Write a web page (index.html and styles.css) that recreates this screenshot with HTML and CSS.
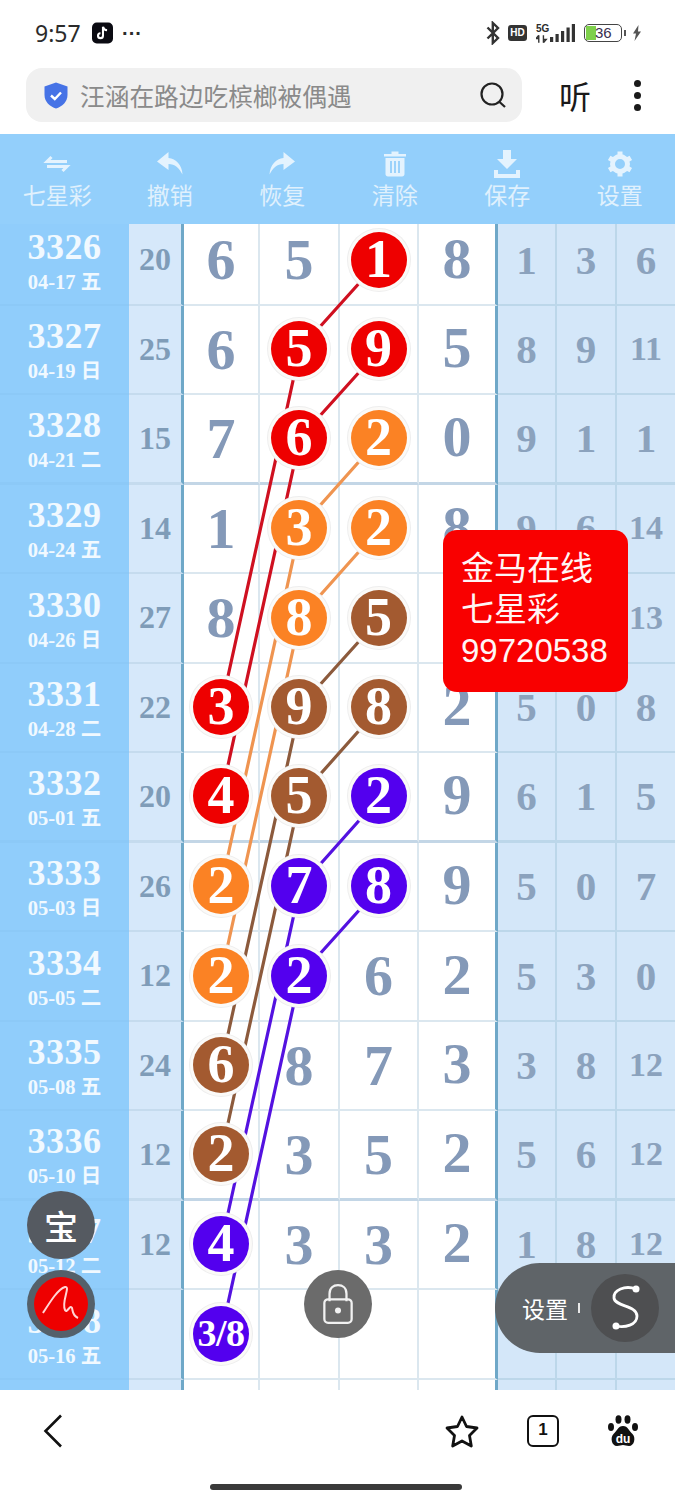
FILE: index.html
```html
<!DOCTYPE html>
<html>

<head>
    <meta charset="UTF-8">
    <title>七星彩</title>
    <link rel="stylesheet" href="styles.css">
</head>

<body>

    <main class="phone">

        <div class="status">
            <span class="time">9:57</span>
            <svg class="tiktok" viewBox="0 0 22 22"><rect width="22" height="22" rx="5" fill="#0b0b12"/><path d="M11.5 4.500V13.800A2.600 2.600 0 1 1 8.900 11.200M11.500 4.500C12 6.800 13.600 8 15.800 8.200" fill="none" stroke="#fff" stroke-width="2.200"/></svg>
            <span class="more">···</span>
            <span class="status-gap"></span>
            <svg class="ic-bt" viewBox="0 0 14 24"><path d="M1.500 6.500L12 17L6.800 22V2L12 7L1.500 17.500" fill="none" stroke="#333" stroke-width="2.400"/></svg>
            <span class="hd">HD</span>
            <span class="net">
                <span class="net-5g">5G</span>
                <svg class="net-arrows" viewBox="0 0 14 8"><path d="M3 0V8M3 0L0 3.500H3M8 8V0M8 8L11 4.500H8" fill="none" stroke="#333" stroke-width="1.500"/></svg>
            </span>
            <svg class="bars" viewBox="0 0 25 18"><rect x="0" y="13" width="3.200" height="5" fill="#333"/><rect x="5.500" y="10" width="3.200" height="8" fill="#333"/><rect x="11" y="7" width="3.200" height="11" fill="#333"/><rect x="16.500" y="3.500" width="3.200" height="14.500" fill="#333"/><rect x="21.800" y="0" width="3.200" height="18" fill="#333"/></svg>
            <span class="battery"><span class="battery-fill"></span><span class="battery-num">36</span></span>
            <span class="battery-tip"></span>
            <svg class="bolt" viewBox="0 0 10 16"><path d="M6.500 0L1 8.500H4L2.500 16L9 6.500H6Z" fill="#555"/></svg>
        </div>

        <div class="addr">
            <div class="search">
                <svg class="shield" viewBox="0 0 24 27"><path d="M12 0.500L23.500 4.500V13C23.500 20 18 24.500 12 26.500C6 24.500 0.500 20 0.500 13V4.500Z" fill="#4673e6"/><path d="M7 13.500L10.800 17L17 10.500" fill="none" stroke="#fff" stroke-width="2.400"/></svg>
                <span class="search-text">汪涵在路边吃槟榔被偶遇</span>
                <svg class="search-ic" viewBox="0 0 26 26"><circle cx="12" cy="12" r="10.500" fill="none" stroke="#222" stroke-width="2.200"/><path d="M19 19.500L25 25" stroke="#222" stroke-width="2.200"/></svg>
            </div>
            <span class="listen">听</span>
            <span class="dots"><i></i><i></i><i></i></span>
        </div>

        <div class="tools">
            <div class="tool">
                <svg class="tool-ic" viewBox="0 0 28 28"><path d="M8.500 7L4 11.500H24M19.500 21L24 16.500H4" fill="none" stroke="#e4f3fe" stroke-width="3"/></svg>
                <span>七星彩</span>
            </div>
            <div class="tool">
                <svg class="tool-ic" viewBox="0 0 28 28"><path d="M12.500 2L1 11.500L12.500 20V14C19 14 23 18 26.500 24.500C26 15 20 8.500 12.500 8Z" fill="#e4f3fe"/></svg>
                <span>撤销</span>
            </div>
            <div class="tool">
                <svg class="tool-ic" viewBox="0 0 28 28"><path d="M15.500 2L27 11.500L15.500 20V14C9 14 5 18 1.500 24.500C2 15 8 8.500 15.500 8Z" fill="#e4f3fe"/></svg>
                <span>恢复</span>
            </div>
            <div class="tool">
                <svg class="tool-ic" viewBox="0 0 28 28"><path d="M10.500 1.500H17.500V4H25V6.500H3V4H10.500ZM4.500 8H23.500V24C23.500 25.500 22.500 26.500 21 26.500H7C5.500 26.500 4.500 25.500 4.500 24Z" fill="#e4f3fe"/><path d="M10 11V23M14 11V23M18 11V23" stroke="#93cffb" stroke-width="1.800"/></svg>
                <span>清除</span>
            </div>
            <div class="tool">
                <svg class="tool-ic" viewBox="0 0 28 28"><path d="M10 0H18V9H24L14 19L4 9H10ZM1 20H5V24H23V20H27V28H1Z" fill="#e4f3fe"/></svg>
                <span>保存</span>
            </div>
            <div class="tool">
                <svg class="tool-ic" viewBox="0 0 28 28"><circle cx="14" cy="14" r="7.500" fill="none" stroke="#e4f3fe" stroke-width="5"/><path d="M14 1.500V6M14 22V26.500M3.200 7.800L7 10M21 18L24.800 20.200M3.200 20.200L7 18M21 10L24.800 7.800" stroke="#e4f3fe" stroke-width="5"/></svg>
                <span>设置</span>
            </div>
        </div>

        <div class="chart">
            <div class="chart-inner">

                <svg class="links" viewBox="0 224 675 1166">
                    <g class="link-red">
                        <path d="M380 260L300 349L221 708"/>
                        <path d="M380 349L300 438L221 797"/>
                    </g>
                    <g class="link-orange">
                        <path d="M380 438L300 528L221 887"/>
                        <path d="M380 528L300 618L221 976"/>
                    </g>
                    <g class="link-brown">
                        <path d="M380 618L300 707L221 1066"/>
                        <path d="M380 707L300 797L221 1155"/>
                    </g>
                    <g class="link-purple">
                        <path d="M380 797L300 887L221 1245"/>
                        <path d="M380 887L300 976L221 1335"/>
                    </g>
                </svg>

                <div class="row">
                    <div class="issue"><b>3326</b><small>04-17 五</small></div><div class="sum">20</div>
                    <div class="c c1">6</div><div class="c c2">5</div><div class="c c3"><span class="ball red">1</span></div><div class="c c4">8</div>
                    <div class="r r1">1</div><div class="r r2">3</div><div class="r r3">6</div>
                </div>
                <div class="row">
                    <div class="issue"><b>3327</b><small>04-19 日</small></div><div class="sum">25</div>
                    <div class="c c1">6</div><div class="c c2"><span class="ball red">5</span></div><div class="c c3"><span class="ball red">9</span></div><div class="c c4">5</div>
                    <div class="r r1">8</div><div class="r r2">9</div><div class="r r3 two">11</div>
                </div>
                <div class="row row-end">
                    <div class="issue"><b>3328</b><small>04-21 二</small></div><div class="sum">15</div>
                    <div class="c c1">7</div><div class="c c2"><span class="ball red">6</span></div><div class="c c3"><span class="ball orange">2</span></div><div class="c c4">0</div>
                    <div class="r r1">9</div><div class="r r2">1</div><div class="r r3">1</div>
                </div>
                <div class="row">
                    <div class="issue"><b>3329</b><small>04-24 五</small></div><div class="sum">14</div>
                    <div class="c c1">1</div><div class="c c2"><span class="ball orange">3</span></div><div class="c c3"><span class="ball orange">2</span></div><div class="c c4">8</div>
                    <div class="r r1">9</div><div class="r r2">6</div><div class="r r3 two">14</div>
                </div>
                <div class="row">
                    <div class="issue"><b>3330</b><small>04-26 日</small></div><div class="sum">27</div>
                    <div class="c c1">8</div><div class="c c2"><span class="ball orange">8</span></div><div class="c c3"><span class="ball brown">5</span></div><div class="c c4"></div>
                    <div class="r r1"></div><div class="r r2"></div><div class="r r3 two">13</div>
                </div>
                <div class="row">
                    <div class="issue"><b>3331</b><small>04-28 二</small></div><div class="sum">22</div>
                    <div class="c c1"><span class="ball red">3</span></div><div class="c c2"><span class="ball brown">9</span></div><div class="c c3"><span class="ball brown">8</span></div><div class="c c4">2</div>
                    <div class="r r1">5</div><div class="r r2">0</div><div class="r r3">8</div>
                </div>
                <div class="row row-end">
                    <div class="issue"><b>3332</b><small>05-01 五</small></div><div class="sum">20</div>
                    <div class="c c1"><span class="ball red">4</span></div><div class="c c2"><span class="ball brown">5</span></div><div class="c c3"><span class="ball purple">2</span></div><div class="c c4">9</div>
                    <div class="r r1">6</div><div class="r r2">1</div><div class="r r3">5</div>
                </div>
                <div class="row">
                    <div class="issue"><b>3333</b><small>05-03 日</small></div><div class="sum">26</div>
                    <div class="c c1"><span class="ball orange">2</span></div><div class="c c2"><span class="ball purple">7</span></div><div class="c c3"><span class="ball purple">8</span></div><div class="c c4">9</div>
                    <div class="r r1">5</div><div class="r r2">0</div><div class="r r3">7</div>
                </div>
                <div class="row">
                    <div class="issue"><b>3334</b><small>05-05 二</small></div><div class="sum">12</div>
                    <div class="c c1"><span class="ball orange">2</span></div><div class="c c2"><span class="ball purple">2</span></div><div class="c c3">6</div><div class="c c4">2</div>
                    <div class="r r1">5</div><div class="r r2">3</div><div class="r r3">0</div>
                </div>
                <div class="row">
                    <div class="issue"><b>3335</b><small>05-08 五</small></div><div class="sum">24</div>
                    <div class="c c1"><span class="ball brown">6</span></div><div class="c c2">8</div><div class="c c3">7</div><div class="c c4">3</div>
                    <div class="r r1">3</div><div class="r r2">8</div><div class="r r3 two">12</div>
                </div>
                <div class="row row-end">
                    <div class="issue"><b>3336</b><small>05-10 日</small></div><div class="sum">12</div>
                    <div class="c c1"><span class="ball brown">2</span></div><div class="c c2">3</div><div class="c c3">5</div><div class="c c4">2</div>
                    <div class="r r1">5</div><div class="r r2">6</div><div class="r r3 two">12</div>
                </div>
                <div class="row">
                    <div class="issue"><b>3337</b><small>05-12 二</small></div><div class="sum">12</div>
                    <div class="c c1"><span class="ball purple">4</span></div><div class="c c2">3</div><div class="c c3">3</div><div class="c c4">2</div>
                    <div class="r r1">1</div><div class="r r2">8</div><div class="r r3 two">12</div>
                </div>
                <div class="row">
                    <div class="issue"><b>3338</b><small>05-16 五</small></div><div class="sum"></div>
                    <div class="c c1"><span class="ball purple frac">3/8</span></div><div class="c c2"></div><div class="c c3"></div><div class="c c4"></div>
                    <div class="r r1"></div><div class="r r2"></div><div class="r r3"></div>
                </div>
                <div class="row">
                    <div class="issue"></div><div class="sum"></div>
                    <div class="c c1"></div><div class="c c2"></div><div class="c c3"></div><div class="c c4"></div>
                    <div class="r r1"></div><div class="r r2"></div><div class="r r3"></div>
                </div>
            </div>
        </div>

        <div class="bottom">
            <svg class="back" viewBox="0 0 20 34"><path d="M18 1.500L2.500 17L18 32.500" fill="none" stroke="#111" stroke-width="2.600"/></svg>
            <span class="bottom-gap"></span>
            <svg class="star" viewBox="0 0 34 33"><path d="M17 2L21.500 11.500L32 13L24.500 20.500L26.300 31L17 26L7.700 31L9.500 20.500L2 13L12.500 11.500Z" fill="none" stroke="#111" stroke-width="2.800" stroke-linejoin="round"/></svg>
            <span class="tab-count">1</span>
            <svg class="paw" viewBox="0 0 30 32"><ellipse cx="10.500" cy="4.500" rx="3" ry="4.200" fill="#111"/><ellipse cx="19.500" cy="4.500" rx="3" ry="4.200" fill="#111"/><ellipse cx="3" cy="12" rx="3" ry="4" fill="#111"/><ellipse cx="27" cy="12" rx="3" ry="4" fill="#111"/><path d="M15 11C20 11 21 16 24.500 19C28 22.500 26.500 31 21 31C18.500 31 17 30 15 30C13 30 11.500 31 9 31C3.500 31 2 22.500 5.500 19C9 16 10 11 15 11Z" fill="#111"/><text x="15" y="28" class="paw-text">du</text></svg>
        </div>

        <div class="home-bar"></div>

        <div class="promo">金马在线<br>七星彩<br>99720538</div>

        <div class="float-bao">宝</div>
        <div class="float-sign">
            <svg viewBox="0 0 54 54"><path d="M9 36C16 25 24 12 31 10C37 9 27 25 31 33C33 37 36 27 38 31C39 34 38 38 44 41" fill="none" stroke="#ffd5d5" stroke-width="2"/></svg>
        </div>
        <div class="float-lock">
            <svg viewBox="0 0 34 44"><path d="M8 19V11C8 5 12 2 17 2C22 2 26 5 26 11V19" fill="none" stroke="#f2f2f2" stroke-width="2.400"/><rect x="2.500" y="17" width="29" height="25" rx="4" fill="none" stroke="#f2f2f2" stroke-width="2.400"/><circle cx="17" cy="29" r="3.200" fill="#f2f2f2"/></svg>
        </div>
        <div class="float-set">
            <span class="float-set-label">设置</span>
            <span class="float-set-tick"></span>
            <span class="float-s">
                <svg viewBox="0 0 40 50"><path d="M31 6C20 2 8 7 9 15C10 24 32 22 32 33C32 42 20 45 11 43" fill="none" stroke="#fff" stroke-width="2.800"/><circle cx="31" cy="6" r="3.500" fill="#fff"/><circle cx="11" cy="43" r="3.500" fill="#fff"/></svg>
            </span>
        </div>
    </main>

</body>

</html>
```

FILE: styles.css
```css
* {
    box-sizing: border-box;
}

body {
    margin: 0;
    background-color: #fff;
    font-family: "Liberation Sans", "Noto Sans CJK SC", sans-serif;
}

.phone {
    position: relative;
    width: 675px;
    height: 1500px;
    overflow: hidden;
    display: flex;
    flex-direction: column;
}

/* status bar */
.status {
    height: 60px;
    padding: 6px 33px 0 35px;
    display: flex;
    align-items: center;
    color: #2b2b2b;
}

.time {
    font-family: "Noto Sans", sans-serif;
    font-size: 23px;
    width: 57px;
}

.tiktok {
    width: 21px;
    height: 22px;
}

.more {
    margin-left: 9px;
    font-size: 20px;
    font-weight: bold;
    letter-spacing: 0;
}

.status-gap {
    flex: 1;
}

.ic-bt {
    width: 14px;
    height: 24px;
}

.hd {
    margin-left: 8px;
    width: 19px;
    height: 16px;
    border-radius: 3px;
    background-color: #333;
    color: #fff;
    font-size: 10px;
    font-weight: bold;
    line-height: 16px;
    text-align: center;
}

.net {
    margin-left: 9px;
    width: 14px;
    display: flex;
    flex-direction: column;
    align-items: flex-start;
}

.net-5g {
    font-size: 10px;
    font-weight: bold;
    line-height: 10px;
}

.net-arrows {
    width: 13px;
    height: 8px;
    margin-top: 1px;
}

.bars {
    width: 25px;
    height: 18px;
}

.battery {
    position: relative;
    margin-left: 9px;
    width: 38px;
    height: 18px;
    border: 1.500px solid #444;
    border-radius: 5px;
    overflow: hidden;
}

.battery-fill {
    position: absolute;
    left: 1px;
    top: 1px;
    bottom: 1px;
    width: 10px;
    background-color: #7ed04b;
}

.battery-num {
    position: absolute;
    left: 10px;
    top: -1px;
    font-size: 15px;
    line-height: 17px;
    color: #3a3050;
}

.battery-tip {
    width: 2px;
    height: 6px;
    margin-left: 2px;
    background-color: #555;
}

.bolt {
    margin-left: 6px;
    width: 10px;
    height: 16px;
}

/* address bar */
.addr {
    height: 74px;
    padding: 8px 0 12px 26px;
    display: flex;
    align-items: center;
}

.search {
    width: 496px;
    height: 54px;
    padding: 0 16px 0 18px;
    border-radius: 16px;
    background-color: #f0f0f0;
    display: flex;
    align-items: center;
}

.shield {
    width: 24px;
    height: 27px;
}

.search-text {
    flex: 1;
    margin-left: 12px;
    font-size: 24.700px;
    color: #8a8a8a;
    white-space: nowrap;
}

.search-ic {
    width: 26px;
    height: 26px;
}

.listen {
    margin-left: 37px;
    font-size: 32px;
    color: #1a1a1a;
}

.dots {
    margin-left: 43px;
    display: flex;
    flex-direction: column;
    gap: 5px;
}

.dots i {
    width: 7px;
    height: 7px;
    border-radius: 50%;
    background-color: #1a1a1a;
}

/* toolbar */
.tools {
    position: relative;
    z-index: 3;
    height: 90px;
    padding: 16px 0 0 1px;
    background-color: #93cffb;
    display: grid;
    grid-template-columns: 112.500px 112.500px 112.500px 112.500px 112.500px 112.500px;
}

.tool {
    display: flex;
    flex-direction: column;
    align-items: center;
    font-size: 23px;
    line-height: 32px;
    color: #e0f1fd;
}

.tool-ic {
    width: 28px;
    height: 28px;
    margin-bottom: 2px;
}

/* chart */
.chart {
    position: relative;
    height: 1166px;
    overflow: hidden;
    background-color: #fff;
}

.chart-inner {
    position: relative;
    margin-top: -8px;
    font-family: "Liberation Serif", "Noto Sans CJK SC", serif;
    font-weight: bold;
}

.links {
    position: absolute;
    left: 0;
    top: 8px;
    width: 675px;
    height: 1166px;
    z-index: 1;
    fill: none;
    stroke-width: 3.200px;
}

.link-red {
    stroke: #cf1020;
}

.link-orange {
    stroke: #ef9450;
}

.link-brown {
    stroke: #8c5a3c;
}

.link-purple {
    stroke: #5412e0;
}

.row {
    height: 89.500px;
    display: grid;
    grid-template-columns: 129px 55px 76px 80px 79px 79px 59px 60px 58px;
}

.row > * {
    border-bottom: 2px solid #dbe7ef;
}

.row-end > * {
    border-bottom: 3px solid #c3d6e6;
}

.row > .issue {
    padding-top: 4px;
    border-bottom-color: #8cc9f7;
    background-color: #90cdfb;
    display: flex;
    flex-direction: column;
    align-items: center;
    justify-content: center;
    color: #f1f9ff;
}

.issue b {
    font-size: 36px;
    line-height: 40px;
    letter-spacing: 0.500px;
}

.issue small {
    font-size: 20.500px;
    line-height: 30px;
}

.row > .sum {
    border-right: 3px solid #6fa8c8;
    border-bottom-color: #c5dbee;
    background-color: #d6e8fa;
    color: #7f9cb8;
    font-size: 32px;
    display: flex;
    align-items: center;
    justify-content: center;
}

.c {
    padding-bottom: 3px;
    display: flex;
    align-items: center;
    justify-content: center;
    color: #8499b8;
    font-size: 58px;
    border-right: 2px solid #dbe7ef;
}

.c1,
.c2,
.c3 {
    padding-bottom: 0;
}

.row > .c4 {
    border-right: 3px solid #6fa8c8;
}

.row > .r {
    display: flex;
    align-items: center;
    justify-content: center;
    background-color: #d4e7f9;
    border-bottom-color: #bcd7ea;
    color: #8ba2bd;
    font-size: 41px;
    border-right: 2px solid #bcd7ea;
}

.row > .r3 {
    border-right: 0;
}

.row > .two {
    font-size: 34px;
}

.ball {
    position: relative;
    z-index: 2;
    width: 56px;
    height: 56px;
    border-radius: 50%;
    box-shadow: 0 0 0 3px #fbfaf8, 0 0 0 4px #eeeeee;
    color: #fff;
    font-size: 54px;
    line-height: 54px;
    text-align: center;
}

.red {
    background-color: #ee0000;
}

.orange {
    background-color: #fb8224;
}

.brown {
    background-color: #a35a30;
}

.purple {
    background-color: #5300ee;
}

.frac {
    font-size: 38px;
    letter-spacing: -0.500px;
}

/* bottom bar */
.bottom {
    flex: 1;
    padding: 0 37px 28px 43px;
    background-color: #fff;
    display: flex;
    align-items: center;
    position: relative;
    z-index: 3;
}

.back {
    width: 20px;
    height: 34px;
}

.bottom-gap {
    flex: 1;
}

.star {
    width: 34px;
    height: 33px;
}

.tab-count {
    margin-left: 48px;
    width: 32px;
    height: 32px;
    border: 2.800px solid #111;
    border-radius: 6px;
    font-size: 17px;
    font-weight: bold;
    line-height: 26px;
    text-align: center;
    color: #111;
}

.paw {
    margin-left: 49px;
    width: 30px;
    height: 32px;
}

.paw-text {
    font-family: "Liberation Sans", sans-serif;
    font-size: 12px;
    font-weight: bold;
    fill: #fff;
    text-anchor: middle;
}

.home-bar {
    position: absolute;
    z-index: 4;
    left: 210px;
    top: 1484px;
    width: 252px;
    height: 6px;
    border-radius: 3px;
    background-color: #3a3a3a;
}

/* things floating over the page */
.promo {
    position: absolute;
    z-index: 5;
    left: 443px;
    top: 530px;
    width: 185px;
    height: 162px;
    padding: 18px 0 0 18px;
    border-radius: 14px;
    background-color: #f90000;
    color: #fff5f5;
    font-size: 33px;
    line-height: 41px;
}

.float-bao,
.float-sign,
.float-lock {
    position: absolute;
    z-index: 5;
    width: 68px;
    height: 68px;
    border-radius: 50%;
    display: flex;
    align-items: center;
    justify-content: center;
}

.float-bao {
    left: 27px;
    top: 1191px;
    background-color: #555a61;
    color: #fff;
    font-size: 34px;
    font-weight: 500;
}

.float-sign {
    left: 27px;
    top: 1270px;
    background-color: #54606a;
}

.float-sign svg {
    width: 54px;
    height: 54px;
    border-radius: 50%;
    background-color: #ee0000;
}

.float-lock {
    left: 304px;
    top: 1270px;
    background-color: #6b6b6b;
}

.float-lock svg {
    width: 32px;
    height: 42px;
}

.float-set {
    position: absolute;
    z-index: 5;
    left: 495px;
    top: 1263px;
    width: 180px;
    height: 90px;
    padding-left: 27px;
    border-radius: 45px 0 0 45px;
    background-color: #5f6468;
    display: flex;
    align-items: center;
    color: #fff;
}

.float-set-label {
    font-size: 23px;
}

.float-set-tick {
    margin-left: 10px;
    width: 2px;
    height: 10px;
    background-color: #e8e8e8;
}

.float-s {
    margin-left: 11px;
    width: 68px;
    height: 68px;
    border-radius: 50%;
    background-color: #4e4f51;
    display: flex;
    align-items: center;
    justify-content: center;
}

.float-s svg {
    width: 40px;
    height: 50px;
}
```
